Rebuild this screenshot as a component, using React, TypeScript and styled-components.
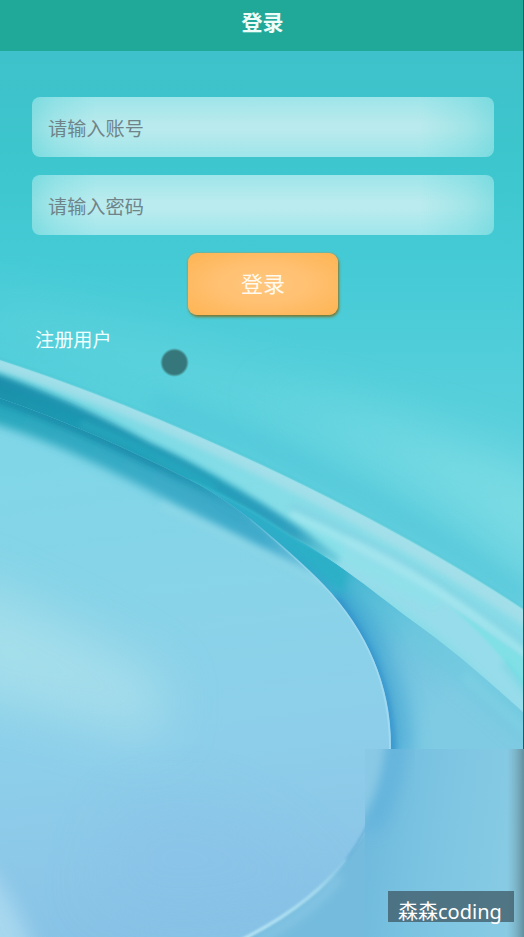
import React from "react";
import styled, { createGlobalStyle } from "styled-components";

const GlobalStyle = createGlobalStyle`
  * { box-sizing: border-box; }
  body { margin: 0; overflow: hidden; font-family: "Noto Sans CJK SC", "Noto Sans", sans-serif; }
`;

const Screen = styled.main`
  position: relative;
  isolation: isolate;
  width: 524px;
  height: 937px;
  overflow: hidden;
  background: #82cfe8;
`;

const Wallpaper = styled.svg`
  position: absolute;
  inset: 0;
  z-index: -1;
  display: block;
`;

const Header = styled.header`
  width: 523px;
  height: 51px;
  padding-bottom: 9px;
  display: flex;
  align-items: center;
  justify-content: center;
  background: #20a898;
`;

const Title = styled.h1`
  margin: 0;
  padding-left: 2px;
  font-size: 21px;
  line-height: 30px;
  font-weight: 700;
  color: #effdf9;
`;

const Form = styled.form`
  display: flex;
  flex-direction: column;
  align-items: center;
  gap: 18px;
  padding: 46px 30px 0 32px;
`;

const Field = styled.input`
  width: 100%;
  height: 60px;
  padding: 2px 18px 0 16px;
  border: 0;
  border-radius: 8px;
  outline: none;
  background:
    linear-gradient(90deg, rgba(82, 208, 212, 0.46), rgba(82, 208, 212, 0.22) 5%, transparent 14%, transparent 84%, rgba(82, 208, 212, 0.24) 94%, rgba(82, 208, 212, 0.48)),
    linear-gradient(180deg, rgba(110, 221, 228, 0.36), transparent 44%, transparent 56%, rgba(110, 221, 228, 0.36)),
    rgba(255, 255, 255, 0.64);
  font-family: inherit;
  font-size: 19.2px;
  color: #667d83;
  &::placeholder { color: #6f8489; opacity: 1; }
`;

const Submit = styled.button`
  width: 150px;
  height: 62px;
  margin: 0;
  padding: 0 0 4px;
  border: 0;
  border-radius: 9px;
  background: radial-gradient(ellipse at center, #ffc77e 0%, #ffc071 45%, #feb452 100%);
  box-shadow: 1px 2px 3px #777936, 0 0 2px #c9903e;
  font-family: inherit;
  font-size: 22px;
  color: #fffaf0;
`;

const Register = styled.a`
  display: block;
  width: max-content;
  margin: 10px 0 0 35px;
  font-size: 19.2px;
  line-height: 28px;
  color: #effefd;
`;

const TouchDot = styled.div`
  position: absolute;
  left: 160px;
  top: 348px;
  width: 29px;
  height: 29px;
  border-radius: 50%;
  background: radial-gradient(circle, #35777b 0 11.5px, #438f93 12.5px, rgba(72, 165, 171, 0.65) 13.5px, transparent 14.5px);
`;

const Watermark = styled.div`
  position: absolute;
  left: 388px;
  top: 891px;
  width: 126px;
  height: 31px;
  padding: 5px 0 0 10px;
  background: rgba(60, 84, 95, 0.72);
  font-family: "Noto Sans", "Noto Sans CJK SC", sans-serif;
  font-size: 20px;
  line-height: 32px;
  white-space: nowrap;
  color: #fff;
`;

const DISC =
  "M-10 395 C60 418 125 448 190 480 Q218 494 250 519 C275 540 300 561 323 585 C366 630 391 683 391 745 C391 830 324 900 240 939 L-10 939Z";
const UPPER_EDGE = "M-10 357 C160 411 375 511 524 610";

function Background() {
  return (
    <Wallpaper width="524" height="937" viewBox="0 0 524 937" aria-hidden="true">
      <defs>
        <linearGradient id="sky" x1="0" y1="51" x2="0" y2="610" gradientUnits="userSpaceOnUse">
          <stop offset="0" stopColor="#3ec1ca" />
          <stop offset="0.2" stopColor="#3dc6cd" />
          <stop offset="0.4" stopColor="#46cbd6" />
          <stop offset="0.62" stopColor="#56cfdb" />
          <stop offset="1" stopColor="#6dd1e0" />
        </linearGradient>
        <linearGradient id="ribbon" x1="0" y1="361" x2="524" y2="650" gradientUnits="userSpaceOnUse">
          <stop offset="0" stopColor="#74d8e3" />
          <stop offset="0.3" stopColor="#7fdbe6" />
          <stop offset="0.7" stopColor="#8cdfe9" />
          <stop offset="1" stopColor="#88dbe8" />
        </linearGradient>
        <linearGradient id="wedge" x1="0" y1="380" x2="345" y2="562" gradientUnits="userSpaceOnUse">
          <stop offset="0" stopColor="#1a91ab" />
          <stop offset="0.6" stopColor="#28a8c0" />
          <stop offset="0.85" stopColor="#35a5c2" />
          <stop offset="1" stopColor="#5abfd3" stopOpacity="0.5" />
        </linearGradient>
        <linearGradient id="wedgeLine" x1="150" y1="448" x2="315" y2="540" gradientUnits="userSpaceOnUse">
          <stop offset="0" stopColor="#1e8ead" />
          <stop offset="0.7" stopColor="#2795b8" />
          <stop offset="1" stopColor="#2795b8" stopOpacity="0" />
        </linearGradient>
        <linearGradient id="creaseLine" x1="150" y1="460" x2="250" y2="520" gradientUnits="userSpaceOnUse">
          <stop offset="0" stopColor="#1789a7" />
          <stop offset="0.5" stopColor="#2496b3" />
          <stop offset="1" stopColor="#3aa6c6" stopOpacity="0" />
        </linearGradient>
        <linearGradient id="disc" x1="150" y1="450" x2="210" y2="920" gradientUnits="userSpaceOnUse">
          <stop offset="0" stopColor="#80d6e7" />
          <stop offset="0.35" stopColor="#89d3e8" />
          <stop offset="0.62" stopColor="#8dcfea" />
          <stop offset="0.86" stopColor="#8cc7e8" />
          <stop offset="1" stopColor="#88c3e6" />
        </linearGradient>
        <linearGradient id="slope" x1="320" y1="590" x2="450" y2="700" gradientUnits="userSpaceOnUse">
          <stop offset="0" stopColor="#2fabc8" />
          <stop offset="0.3" stopColor="#54b7d8" />
          <stop offset="0.6" stopColor="#72c4df" />
          <stop offset="1" stopColor="#7fcbe4" />
        </linearGradient>
        <linearGradient id="discShade" x1="0" y1="410" x2="305" y2="570" gradientUnits="userSpaceOnUse">
          <stop offset="0" stopColor="#2aa8bd" />
          <stop offset="0.5" stopColor="#3aabc7" />
          <stop offset="0.85" stopColor="#40aacb" />
          <stop offset="1" stopColor="#6abdda" />
        </linearGradient>
        <linearGradient id="patch" x1="365" y1="800" x2="524" y2="820" gradientUnits="userSpaceOnUse">
          <stop offset="0" stopColor="#6fb9dd" />
          <stop offset="0.3" stopColor="#78c1e0" />
          <stop offset="0.62" stopColor="#80c7e3" />
          <stop offset="1" stopColor="#88cbe3" />
        </linearGradient>
        <linearGradient id="edge" x1="507" y1="0" x2="524" y2="0" gradientUnits="userSpaceOnUse">
          <stop offset="0" stopColor="#7aa9b8" stopOpacity="0" />
          <stop offset="0.5" stopColor="#719fae" stopOpacity="0.5" />
          <stop offset="1" stopColor="#618f9f" />
        </linearGradient>
        <linearGradient id="rim" x1="240" y1="510" x2="391" y2="740" gradientUnits="userSpaceOnUse">
          <stop offset="0" stopColor="#8bd4ea" stopOpacity="0" />
          <stop offset="0.4" stopColor="#9bd8ee" />
          <stop offset="1" stopColor="#a0daf2" />
        </linearGradient>
        <linearGradient id="lowRim" x1="350" y1="852" x2="245" y2="938" gradientUnits="userSpaceOnUse">
          <stop offset="0" stopColor="#9fd5ec" stopOpacity="0" />
          <stop offset="0.35" stopColor="#a8dcf0" />
          <stop offset="1" stopColor="#c0e9f7" />
        </linearGradient>
        <filter id="b1" x="-20%" y="-20%" width="140%" height="140%"><feGaussianBlur stdDeviation="0.9" /></filter>
        <filter id="b3" x="-20%" y="-20%" width="140%" height="140%"><feGaussianBlur stdDeviation="3" /></filter>
        <filter id="b5" x="-30%" y="-30%" width="160%" height="160%"><feGaussianBlur stdDeviation="5" /></filter>
        <filter id="b8" x="-60%" y="-60%" width="220%" height="220%"><feGaussianBlur stdDeviation="10" /></filter>
        <filter id="b20" x="-80%" y="-80%" width="260%" height="260%"><feGaussianBlur stdDeviation="26" /></filter>
        <clipPath id="discClip"><path d={DISC} /></clipPath>
        <clipPath id="ribbonClip"><path d="M-10 357 C160 411 375 511 524 610 V720 H300 L-10 450Z" /></clipPath>
        <clipPath id="slopeClip">
          <path d="M190 480 Q250 507 290 536 C335 560 366 586 407 617 C451 648 484 677 524 713 V937 H190Z" />
        </clipPath>
        <clipPath id="patchClip"><path d="M365 749H524V937H365Z" /></clipPath>
      </defs>

      <path d="M0 51H524V620H0Z" fill="url(#sky)" />
      <path d="M-20 295 Q230 335 560 510 V570 Q300 415 -20 325Z" fill="#82e0e8" opacity="0.28" filter="url(#b20)" />
      <path d="M250 390 Q420 450 570 590 V485 Q420 425 250 390Z" fill="#92e5e9" opacity="0.5" filter="url(#b20)" />
      <path d="M150 402 Q350 470 530 602" fill="none" stroke="#4fc5d9" strokeWidth="24" opacity="0.55" filter="url(#b8)" />

      <g clipPath="url(#ribbonClip)">
        <path d="M-10 340H524V730H-10Z" fill="url(#ribbon)" />
        <path d="M-30 354 C160 408 385 522 530 620" fill="none" stroke="#a5dfe9" strokeWidth="16" opacity="0.9" filter="url(#b3)" />
        <path d="M290 506 Q420 563 535 655" fill="none" stroke="#83d3e3" strokeWidth="10" opacity="0.7" filter="url(#b3)" />
        <path d="M340 555 Q440 590 540 712" fill="none" stroke="#98dcea" strokeWidth="38" opacity="0.9" filter="url(#b3)" />
        <path d="M240 498 Q340 555 440 602" fill="none" stroke="#8be3ea" strokeWidth="18" opacity="0.6" filter="url(#b5)" />
        <path d="M290 514 Q435 578 535 662" fill="none" stroke="#a8e9f0" strokeWidth="7" opacity="0.85" filter="url(#b3)" />
        <path d="M440 600 Q484 630 526 690 V660 Q484 628 440 600Z" fill="#80e0e6" filter="url(#b1)" />
        <path d="M504 663 L530 696" fill="none" stroke="#57cfda" strokeWidth="4" opacity="0.5" filter="url(#b3)" />

        <path d="M-20 368 C35 387 96 414 150 444 C196 463 275 507 340 557 L338 564 L190 490 L-20 407Z" fill="url(#wedge)" filter="url(#b3)" />
        <path d="M-10 378 C45 394 95 418 150 448 C196 470 240 498 318 545" fill="none" stroke="url(#wedgeLine)" strokeWidth="7" opacity="0.65" filter="url(#b3)" />
        <path d="M80 423 Q155 451 215 488" fill="none" stroke="#2badc2" strokeWidth="5" opacity="0.8" filter="url(#b3)" />
      </g>
      <path d={UPPER_EDGE} fill="none" stroke="#3db7c7" strokeWidth="1.5" opacity="0.45" transform="translate(0 -1)" filter="url(#b1)" />
      <path d={UPPER_EDGE} fill="none" stroke="#a5e5ed" strokeWidth="1.5" filter="url(#b1)" transform="translate(0 1)" />

      <g clipPath="url(#slopeClip)">
        <path d="M190 470H524V937H190Z" fill="url(#slope)" />
        <path d="M330 550 C390 600 460 644 540 720 V752 C470 690 400 640 330 580Z" fill="#66cadc" opacity="0.5" filter="url(#b8)" />
        <path d="M464 675 L534 738" stroke="#9adfe9" strokeWidth="7" opacity="0.35" filter="url(#b5)" />
        <path d="M315 575 C375 635 400 690 400 760" fill="none" stroke="#41a3d2" strokeWidth="22" opacity="0.75" filter="url(#b8)" />
        <path d="M190 480 Q250 507 290 536 L350 569 L342 596 Q265 515 190 480Z" fill="#2cb0c7" filter="url(#b5)" />
        <path d="M335 598 C370 642 392 690 392 760" fill="none" stroke="#2e8eca" strokeWidth="8" opacity="0.85" filter="url(#b3)" />
      </g>
      <path d="M190 480 Q250 507 290 536 L325 556" fill="none" stroke="#3ec3d2" strokeWidth="1.3" opacity="0.8" filter="url(#b1)" />

      <path d={DISC} fill="url(#disc)" />
      <g clipPath="url(#discClip)">
        <path d="M-50 575 Q50 610 165 680 L160 740 L-50 690Z" fill="#b5e5ed" opacity="0.62" filter="url(#b20)" />
        <path d="M120 810 Q220 760 340 900 L170 920 L90 900Z" fill="#88c0e8" opacity="0.35" filter="url(#b20)" />
        <path d="M-40 840 Q15 885 45 980 H-40Z" fill="#bce4f4" opacity="0.6" filter="url(#b8)" />
        <path d="M-20 380 H190 L250 510 L322 579 Q283 559 217 525 C158 497 80 448 -20 419Z" fill="url(#discShade)" filter="url(#b5)" />
        <path d="M-10 396 C60 419 125 449 190 481 Q218 495 250 520" fill="none" stroke="url(#creaseLine)" strokeWidth="9" opacity="0.85" filter="url(#b3)" />
        <path d="M160 504 Q240 541 328 586" fill="none" stroke="#9addea" strokeWidth="7" opacity="0.5" filter="url(#b3)" />
      </g>
      <path d="M250 519 C275 540 300 561 323 585 C366 630 390 683 390 749" fill="none" stroke="url(#rim)" strokeWidth="1.8" />

      <path d="M391 749 C391 830 324 900 240 939 H524 V749Z" fill="#75bbdd" />
      <path d="M369 822 Q358 845 346 860" fill="none" stroke="#62aed6" strokeWidth="2.5" opacity="0.8" filter="url(#b1)" />
      <path d="M350 855 C320 895 280 921 239 941" fill="none" stroke="url(#lowRim)" strokeWidth="3" filter="url(#b1)" />
      <path d="M340 876 C315 908 285 926 256 942" fill="none" stroke="#9fd5eb" strokeWidth="9" opacity="0.4" filter="url(#b5)" />

      <g clipPath="url(#patchClip)">
        <path d="M365 749H524V937H365Z" fill="url(#patch)" />
        <path d="M362 845 V960" stroke="#75bbdd" strokeWidth="20" filter="url(#b5)" />
        <path d="M398 720 Q396 785 370 828" fill="none" stroke="#58addb" strokeWidth="16" opacity="0.8" filter="url(#b8)" />
        <path d="M350 725H386Q384 785 360 822L350 826Z" fill="#8ac9e5" filter="url(#b5)" />
        <path d="M507 749H524V937H507Z" fill="url(#edge)" />
      </g>
      <path d="M523 0H524V749H523Z" fill="#245b60" />
    </Wallpaper>
  );
}

export default function App() {
  return (
    <Screen>
      <GlobalStyle />
      <Background />
      <Header><Title>登录</Title></Header>
      <Form onSubmit={(event) => event.preventDefault()}>
        <Field type="text" placeholder="请输入账号" aria-label="账号" />
        <Field type="password" placeholder="请输入密码" aria-label="密码" />
        <Submit type="submit">登录</Submit>
      </Form>
      <Register>注册用户</Register>
      <TouchDot />
      <Watermark>森森coding</Watermark>
    </Screen>
  );
}
